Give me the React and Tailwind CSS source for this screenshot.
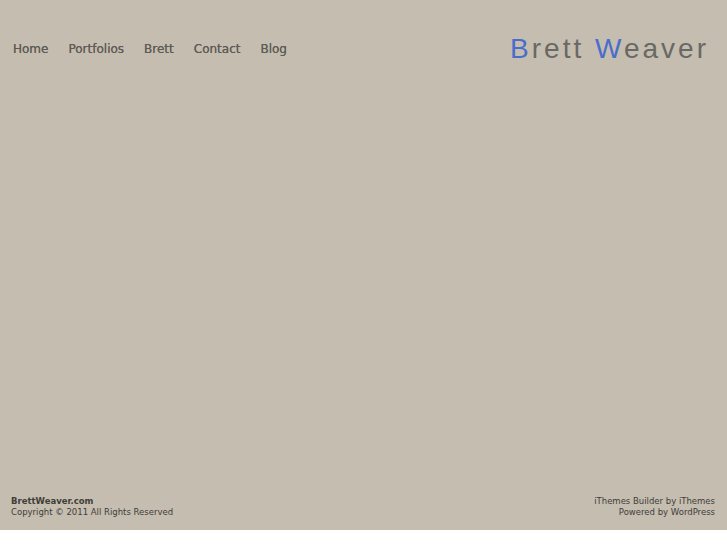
import React from 'react';

const links = ['Home', 'Portfolios', 'Brett', 'Contact', 'Blog'];

export default function App() {
  return (
    <div className="w-full min-h-screen bg-white" style={{ fontFamily: '"DejaVu Sans", sans-serif' }}>
      <div className="h-[530px] bg-[#c4bdb0] flex flex-col">
        {/* Header */}
        <header className="flex items-center justify-between pt-[33px] pl-[13px] pr-[18px]">
          <nav className="flex items-center gap-[20px] text-[12px] text-[#5f5c56] [text-shadow:0_0_0.4px_#5f5c56]">
            {links.map((l) => (
              <a key={l} href="#" className="leading-none">{l}</a>
            ))}
          </nav>
          <h1
            className="text-[28px] leading-[32px] text-[#6a6864] tracking-[3px]"
            style={{ fontFamily: '"Liberation Sans", Arial, sans-serif' }}
          >
            <span className="text-[#4a6dcb]">B</span>rett <span className="text-[#4a6dcb]">W</span>eaver
          </h1>
        </header>

        <div className="flex-1" />

        {/* Footer */}
        <footer className="flex justify-between items-start px-[11px] pb-[12px] text-[8.5px] leading-[11px] text-[#3f3d39]">
          <div>
            <div className="font-bold">BrettWeaver.com</div>
            <div>Copyright © 2011 All Rights Reserved</div>
          </div>
          <div className="text-right pr-[1px]">
            <div>iThemes Builder by iThemes</div>
            <div>Powered by WordPress</div>
          </div>
        </footer>
      </div>
    </div>
  );
}
